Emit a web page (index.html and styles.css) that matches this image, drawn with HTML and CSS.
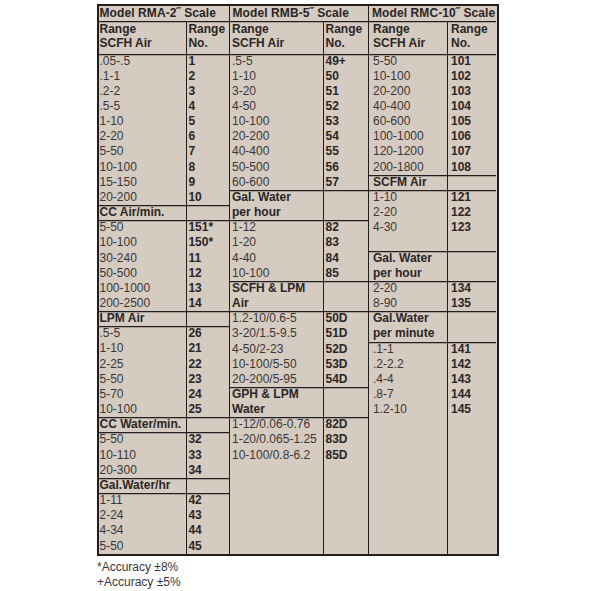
FILE: index.html
```html
<!DOCTYPE html>
<html>
<head>
<meta charset="utf-8">
<title>Range tables</title>
<link rel="stylesheet" href="styles.css">
</head>
<body>
<div class="sheet">
  <div class="table">
    <div class="col c1">
      <div class="title">Model RMA-2˝ Scale</div>
      <div class="row hdr ln"><div class="a">Range<br>SCFH Air</div><div class="b">Range<br>No.</div></div>
      <div class="row ln"><div class="a">.05-.5</div><div class="b">1</div></div>
      <div class="row"><div class="a">.1-1</div><div class="b">2</div></div>
      <div class="row"><div class="a">.2-2</div><div class="b">3</div></div>
      <div class="row"><div class="a">.5-5</div><div class="b">4</div></div>
      <div class="row"><div class="a">1-10</div><div class="b">5</div></div>
      <div class="row"><div class="a">2-20</div><div class="b">6</div></div>
      <div class="row"><div class="a">5-50</div><div class="b">7</div></div>
      <div class="row"><div class="a">10-100</div><div class="b">8</div></div>
      <div class="row"><div class="a">15-150</div><div class="b">9</div></div>
      <div class="row"><div class="a">20-200</div><div class="b">10</div></div>
      <div class="row ln sec"><div class="a">CC Air/min.</div><div class="b"></div></div>
      <div class="row ln"><div class="a">5-50</div><div class="b">151*</div></div>
      <div class="row"><div class="a">10-100</div><div class="b">150*</div></div>
      <div class="row"><div class="a">30-240</div><div class="b">11</div></div>
      <div class="row"><div class="a">50-500</div><div class="b">12</div></div>
      <div class="row"><div class="a">100-1000</div><div class="b">13</div></div>
      <div class="row"><div class="a">200-2500</div><div class="b">14</div></div>
      <div class="row ln sec"><div class="a">LPM Air</div><div class="b"></div></div>
      <div class="row ln"><div class="a">.5-5</div><div class="b">26</div></div>
      <div class="row"><div class="a">1-10</div><div class="b">21</div></div>
      <div class="row"><div class="a">2-25</div><div class="b">22</div></div>
      <div class="row"><div class="a">5-50</div><div class="b">23</div></div>
      <div class="row"><div class="a">5-70</div><div class="b">24</div></div>
      <div class="row"><div class="a">10-100</div><div class="b">25</div></div>
      <div class="row ln sec"><div class="a">CC Water/min.</div><div class="b"></div></div>
      <div class="row ln"><div class="a">5-50</div><div class="b">32</div></div>
      <div class="row"><div class="a">10-110</div><div class="b">33</div></div>
      <div class="row"><div class="a">20-300</div><div class="b">34</div></div>
      <div class="row ln sec"><div class="a">Gal.Water/hr</div><div class="b"></div></div>
      <div class="row ln"><div class="a">1-11</div><div class="b">42</div></div>
      <div class="row"><div class="a">2-24</div><div class="b">43</div></div>
      <div class="row"><div class="a">4-34</div><div class="b">44</div></div>
      <div class="row"><div class="a">5-50</div><div class="b">45</div></div>
      <div class="row fill"><div class="a"></div><div class="b"></div></div>
    </div>

    <div class="col c2">
      <div class="title">Model RMB-5˝ Scale</div>
      <div class="row hdr ln"><div class="a">Range<br>SCFH Air</div><div class="b">Range<br>No.</div></div>
      <div class="row ln"><div class="a">.5-5</div><div class="b">49+</div></div>
      <div class="row"><div class="a">1-10</div><div class="b">50</div></div>
      <div class="row"><div class="a">3-20</div><div class="b">51</div></div>
      <div class="row"><div class="a">4-50</div><div class="b">52</div></div>
      <div class="row"><div class="a">10-100</div><div class="b">53</div></div>
      <div class="row"><div class="a">20-200</div><div class="b">54</div></div>
      <div class="row"><div class="a">40-400</div><div class="b">55</div></div>
      <div class="row"><div class="a">50-500</div><div class="b">56</div></div>
      <div class="row"><div class="a">60-600</div><div class="b">57</div></div>
      <div class="row ln sec two"><div class="a">Gal. Water<br>per hour</div><div class="b"></div></div>
      <div class="row ln"><div class="a">1-12</div><div class="b">82</div></div>
      <div class="row"><div class="a">1-20</div><div class="b">83</div></div>
      <div class="row"><div class="a">4-40</div><div class="b">84</div></div>
      <div class="row"><div class="a">10-100</div><div class="b">85</div></div>
      <div class="row ln sec two"><div class="a">SCFH &amp; LPM<br>Air</div><div class="b"></div></div>
      <div class="row ln"><div class="a">1.2-10/0.6-5</div><div class="b">50D</div></div>
      <div class="row"><div class="a">3-20/1.5-9.5</div><div class="b">51D</div></div>
      <div class="row"><div class="a">4-50/2-23</div><div class="b">52D</div></div>
      <div class="row"><div class="a">10-100/5-50</div><div class="b">53D</div></div>
      <div class="row"><div class="a">20-200/5-95</div><div class="b">54D</div></div>
      <div class="row ln sec two"><div class="a">GPH &amp; LPM<br>Water</div><div class="b"></div></div>
      <div class="row ln"><div class="a">1-12/0.06-0.76</div><div class="b">82D</div></div>
      <div class="row"><div class="a">1-20/0.065-1.25</div><div class="b">83D</div></div>
      <div class="row"><div class="a">10-100/0.8-6.2</div><div class="b">85D</div></div>
      <div class="row fill"><div class="a"></div><div class="b"></div></div>
    </div>

    <div class="col c3">
      <div class="title">Model RMC-10˝ Scale</div>
      <div class="row hdr ln"><div class="a">Range<br>SCFH Air</div><div class="b">Range<br>No.</div></div>
      <div class="row ln"><div class="a">5-50</div><div class="b">101</div></div>
      <div class="row"><div class="a">10-100</div><div class="b">102</div></div>
      <div class="row"><div class="a">20-200</div><div class="b">103</div></div>
      <div class="row"><div class="a">40-400</div><div class="b">104</div></div>
      <div class="row"><div class="a">60-600</div><div class="b">105</div></div>
      <div class="row"><div class="a">100-1000</div><div class="b">106</div></div>
      <div class="row"><div class="a">120-1200</div><div class="b">107</div></div>
      <div class="row"><div class="a">200-1800</div><div class="b">108</div></div>
      <div class="row ln sec"><div class="a">SCFM Air</div><div class="b"></div></div>
      <div class="row ln"><div class="a">1-10</div><div class="b">121</div></div>
      <div class="row"><div class="a">2-20</div><div class="b">122</div></div>
      <div class="row"><div class="a">4-30</div><div class="b">123</div></div>
      <div class="row"><div class="a"></div><div class="b"></div></div>
      <div class="row ln sec two"><div class="a">Gal. Water<br>per hour</div><div class="b"></div></div>
      <div class="row ln"><div class="a">2-20</div><div class="b">134</div></div>
      <div class="row"><div class="a">8-90</div><div class="b">135</div></div>
      <div class="row ln sec two"><div class="a">Gal.Water<br>per minute</div><div class="b"></div></div>
      <div class="row ln"><div class="a">.1-1</div><div class="b">141</div></div>
      <div class="row"><div class="a">.2-2.2</div><div class="b">142</div></div>
      <div class="row"><div class="a">.4-4</div><div class="b">143</div></div>
      <div class="row"><div class="a">.8-7</div><div class="b">144</div></div>
      <div class="row"><div class="a">1.2-10</div><div class="b">145</div></div>
      <div class="row fill"><div class="a"></div><div class="b"></div></div>
    </div>
  </div>
  <div class="notes">*Accuracy ±8%<br>+Accuracy ±5%</div>
</div>
</body>
</html>
```

FILE: styles.css
```css
* { box-sizing: border-box; }
html, body { margin: 0; padding: 0; background: #ffffff; }
body {
  font-family: "Liberation Sans", Arial, sans-serif;
  font-size: 12px;
  color: #3a3636;
}
.sheet { padding: 4px 0 0 97px; }
.table {
  display: flex;
  width: 402px;
  background: #d6cbc1;
  border: 2.5px solid #231f20;
  border-top-width: 2px;
}
.col { display: flex; flex-direction: column; }
.c1 { width: 129.5px; }
.c2 { width: 139.5px; border-left: 1.4px solid #231f20; }
.c3 { width: 128px; border-left: 1.4px solid #231f20; }

.title {
  height: 14.5px;
  line-height: 14.5px;
  font-weight: bold;
  letter-spacing: 0.1px;
  white-space: nowrap;
  color: #2a2626;
}
.row {
  display: flex;
  flex: none;
  height: 15.17px;
  line-height: 15.17px;
  white-space: nowrap;
}
.row.two { height: 30.34px; }
.row.hdr {
  height: 33px;
  line-height: 14.5px;
  padding-top: 1.3px;
  font-weight: bold;
  color: #2a2626;
}
.row.fill { flex: 1 1 auto; height: auto; }
.ln { box-shadow: inset 0 1.3px 0 #231f20; }
.a { flex: none; border-right: 1.4px solid #231f20; }
.b { flex: 1; font-weight: bold; color: #2a2626; }
.sec .a { font-weight: bold; color: #2a2626; }
.hdr .a { font-weight: bold; }

.c1 .title { padding-left: 0.5px; }
.c1 .a { width: 87.9px; padding-left: 0.5px; }
.c1 .b { padding-left: 1.5px; }

.c2 .title { padding-left: 3px; }
.c2 .a { width: 94.5px; padding-left: 2.5px; }
.c2 .b { padding-left: 1.5px; }

.c3 .title { padding-left: 3px; }
.c3 .a { width: 78.5px; padding-left: 4px; }
.c3 .b { padding-left: 3.5px; }

.notes {
  margin-top: 4px;
  font-size: 12px;
  line-height: 15px;
  color: #3a3636;
}
```
